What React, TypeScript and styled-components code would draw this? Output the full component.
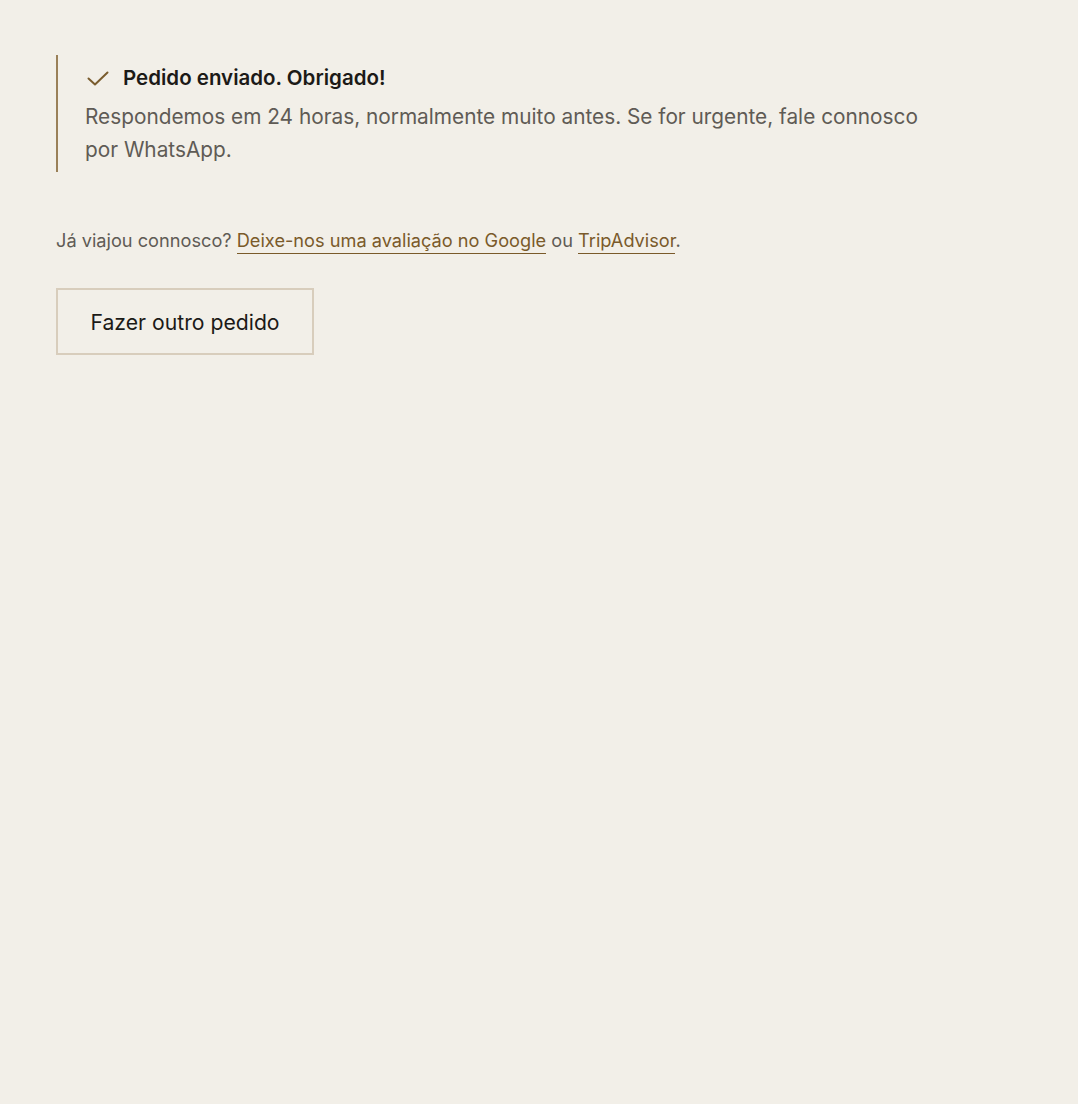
import styled, { createGlobalStyle } from 'styled-components';

const GlobalStyle = createGlobalStyle`
  html, body {
    margin: 0;
    padding: 0;
    background: #f2efe8;
  }
  body {
    font-family: Inter, "Noto Sans", sans-serif;
    color: #1c1a17;
  }
`;

export default function App() {
  return (
    <>
      <GlobalStyle />
      <Page>
        <Notice>
          <NoticeTitle>
            <CheckIcon viewBox="0 0 24 24" aria-hidden="true">
              <path d="M2.5 12.5l6.5 6L21.5 6.5" />
            </CheckIcon>
            Pedido enviado. Obrigado!
          </NoticeTitle>
          <NoticeText>
            Respondemos em 24 horas, normalmente muito antes. Se for urgente, fale connosco
            por WhatsApp.
          </NoticeText>
        </Notice>

        <Review>
          Já viajou connosco? <Link href="#">Deixe-nos uma avaliação no Google</Link> ou{' '}
          <Link href="#">TripAdvisor</Link>.
        </Review>

        <OutlineButton type="button">Fazer outro pedido</OutlineButton>
      </Page>
    </>
  );
}

const Page = styled.main`
  min-height: 1104px;
  box-sizing: border-box;
  padding: 55px 56px;
  display: flex;
  flex-direction: column;
  align-items: flex-start;
`;

const Notice = styled.section`
  border-left: 2px solid #9a8058;
  padding: 8px 0 6px 27px;
  width: 850px;
  display: flex;
  flex-direction: column;
  gap: 8px;
`;

const NoticeTitle = styled.h2`
  margin: 0;
  display: flex;
  align-items: center;
  gap: 13px;
  font-size: 20.5px;
  font-weight: 600;
  line-height: 29px;
  color: #1c1a17;
`;

const CheckIcon = styled.svg`
  width: 24px;
  height: 24px;
  margin-left: 1px;
  fill: none;
  stroke: #7a5c2e;
  stroke-width: 2;
  stroke-linecap: round;
  stroke-linejoin: round;
`;

const NoticeText = styled.p`
  margin: 0;
  font-size: 20.8px;
  line-height: 33px;
  color: #5f5b55;
`;

const Review = styled.p`
  margin: 54px 0 0;
  font-size: 18.2px;
  line-height: 28px;
  color: #5f5b55;
`;

const Link = styled.a`
  color: #7a5a2a;
  text-decoration: none;
  padding-bottom: 2px;
  border-bottom: 1px solid #7a5a2a;
`;

const OutlineButton = styled.button`
  margin-top: 34px;
  width: 258px;
  height: 67px;
  background: transparent;
  border: 2px solid #d8cdbc;
  font-family: inherit;
  font-size: 21.2px;
  color: #1c1a17;
  cursor: pointer;
`;
